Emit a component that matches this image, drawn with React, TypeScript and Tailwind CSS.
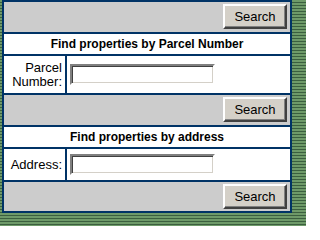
const stripes =
  "bg-[repeating-linear-gradient(to_bottom,#6e9a69_0px,#6e9a69_2px,#3b5f3f_2px,#3b5f3f_3px)]"

const SearchButton = () => (
  <button
    type="button"
    className="w-[64px] h-[25px] bg-[#d4d0c8] border-2 border-t-white border-l-white border-b-[#404040] border-r-[#404040] shadow-[inset_-1px_-1px_0_#808080] text-[13px] leading-none text-black"
  >
    Search
  </button>
)

const TextBox = () => (
  <input
    type="text"
    className="w-[145px] h-[21px] bg-white border-2 border-t-[#808080] border-l-[#808080] border-b-white border-r-white shadow-[inset_1px_1px_0_#404040,inset_-1px_-1px_0_#d4d0c8] outline-none px-1 text-[13px]"
  />
)

const ButtonRow = ({ height }: { height: string }) => (
  <div className={`${height} bg-[#cccccc] flex justify-end items-start pt-[2px] pr-[3px]`}>
    <SearchButton />
  </div>
)

export default function App() {
  return (
    <div className={`w-[306px] h-[226px] overflow-hidden pl-[2px] ${stripes} font-['Liberation_Sans',Arial,sans-serif]`}>
      <div className="w-[290px] bg-[#003366] p-[2px] flex flex-col gap-[2px]">
        <ButtonRow height="h-[30px]" />
        <div className="h-[20px] bg-white flex items-center justify-center text-[12px] font-bold text-black">
          Find properties by Parcel Number
        </div>
        <div className="h-[37px] flex gap-[2px]">
          <div className="w-[61px] bg-white flex items-center justify-end pr-[3px] text-right text-[13px] leading-[14px] text-black">
            <label htmlFor="parcel">
              Parcel
              <br />
              Number:
            </label>
          </div>
          <div className="flex-1 bg-white flex items-center pl-[3px]">
            <TextBox />
          </div>
        </div>
        <ButtonRow height="h-[30px]" />
        <div className="h-[20px] bg-white flex items-center justify-center text-[12px] font-bold text-black">
          Find properties by address
        </div>
        <div className="h-[31px] flex gap-[2px]">
          <div className="w-[61px] bg-white flex items-center justify-end pr-[3px] text-[13px] text-black">
            <label htmlFor="address">Address:</label>
          </div>
          <div className="flex-1 bg-white flex items-center pl-[3px]">
            <TextBox />
          </div>
        </div>
        <ButtonRow height="h-[29px]" />
      </div>
    </div>
  )
}
